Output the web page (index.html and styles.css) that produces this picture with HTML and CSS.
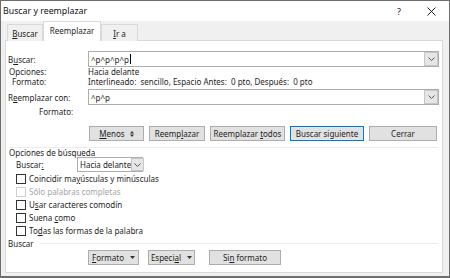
FILE: index.html
```
<!DOCTYPE html>
<html lang="es">
<head>
<meta charset="utf-8">
<title>Buscar y reemplazar</title>
<link rel="stylesheet" href="styles.css">
</head>
<body>
<div class="window">
  <div class="titlebar">
    <span class="title">Buscar y reemplazar</span>
    <span class="help">?</span>
    <span class="close"><svg width="9" height="9" viewBox="0 0 9 9"><path d="M0.5 0.5L8.5 8.5M8.5 0.5L0.5 8.5" stroke="#222" stroke-width="1"/></svg></span>
  </div>
  <div class="body">
    <div class="tabs">
      <div class="tab"><span><u>B</u>uscar</span></div>
      <div class="tab active"><span>Reemplazar</span></div>
      <div class="tab tab-go"><span><u>I</u>r a</span></div>
    </div>
    <div class="panel">
      <div class="field field-find">
        <span class="label">B<u>u</u>scar:</span>
        <div class="combo"><span class="value">^p^p^p^p<span class="caret"></span></span>
          <span class="drop"><svg width="7" height="4" viewBox="0 0 7 4"><path d="M0.5 0.5L3.5 3.5L6.5 0.5" fill="none" stroke="#555" stroke-width="1"/></svg></span>
        </div>
      </div>
      <div class="info"><span class="label">Opciones:</span><span>Hacia delante</span></div>
      <div class="info"><span class="label label-fmt">Formato:</span><span>Interlineado:&nbsp; sencillo, Espacio Antes:&nbsp; 0 pto, Después:&nbsp; 0 pto</span></div>
      <div class="field field-replace">
        <span class="label">R<u>e</u>emplazar con:</span>
        <div class="combo"><span class="value">^p^p</span>
          <span class="drop"><svg width="7" height="4" viewBox="0 0 7 4"><path d="M0.5 0.5L3.5 3.5L6.5 0.5" fill="none" stroke="#555" stroke-width="1"/></svg></span>
        </div>
      </div>
      <div class="info info-fmt2"><span class="label label-fmt2">Formato:</span></div>
      <div class="buttons buttons-top">
        <div class="btn b-less"><span><u>M</u>enos</span><svg class="updown" width="4" height="6" viewBox="0 0 4 6"><path d="M2 0L4 2.4H0Z M2 6L4 3.6H0Z" fill="#333"/></svg></div>
        <div class="btn b-rep"><span>Reemp<u>l</u>azar</span></div>
        <div class="btn b-all"><span>Reemplazar <u>t</u>odos</span></div>
        <div class="btn b-next focus"><span>Buscar siguiente</span></div>
        <div class="btn b-close"><span>Cerrar</span></div>
      </div>
      <div class="sep"></div>
      <div class="section">Opciones de búsqueda</div>
      <div class="search-dir">
        <span class="label2">Buscar<u>:</u></span>
        <div class="select"><span>Hacia delante</span><span class="drop"><svg width="7" height="4" viewBox="0 0 7 4"><path d="M0.5 0.5L3.5 3.5L6.5 0.5" fill="none" stroke="#555" stroke-width="1"/></svg></span></div>
      </div>
      <div class="check"><span class="box"></span><span>Coincidir ma<u>y</u>úsculas y minúsculas</span></div>
      <div class="check disabled"><span class="box"></span><span>Sólo palabras completas</span></div>
      <div class="check"><span class="box"></span><span>U<u>s</u>ar caracteres comodín</span></div>
      <div class="check"><span class="box"></span><span>Suena <u>c</u>omo</span></div>
      <div class="check"><span class="box"></span><span>To<u>d</u>as las formas de la palabra</span></div>
      <div class="group"><span>Buscar</span><span class="gline"></span></div>
      <div class="buttons buttons-bottom">
        <div class="btn b-fmt"><span><u>F</u>ormato</span><svg class="tri" width="5" height="3" viewBox="0 0 5 3"><path d="M0 0H5L2.5 3Z" fill="#333"/></svg></div>
        <div class="btn b-spec"><span>Especi<u>a</u>l</span><svg class="tri" width="5" height="3" viewBox="0 0 5 3"><path d="M0 0H5L2.5 3Z" fill="#333"/></svg></div>
        <div class="btn b-nofmt"><span>Si<u>n</u> formato</span></div>
      </div>
    </div>
  </div>
</div>
</body>
</html>
```
FILE: styles.css
```
* { box-sizing: border-box; }
html, body { margin: 0; padding: 0; }
body {
  width: 450px;
  height: 278px;
  overflow: hidden;
  font-family: "Noto Sans", "DejaVu Sans", sans-serif;
  font-size: 8px;
  color: #1e1e1e;
  background: #fff;
  white-space: nowrap;
}
u { text-decoration: underline; text-underline-offset: 1px; }
.window {
  width: 450px;
  height: 278px;
  border: 1px solid #6e6e6e;
  border-bottom-width: 2px;
  background: #f0f0f0;
  display: flex;
  flex-direction: column;
}
.titlebar {
  height: 20px;
  background: #fff;
  display: flex;
  align-items: center;
  padding-left: 2px;
  font-size: 8.8px;
  color: #111;
}
.title { flex: 1; }
.help { width: 12px; text-align: center; margin-right: 22px; font-size: 9px; }
.close { width: 10px; height: 9px; margin-right: 12px; display: flex; }
.body {
  flex: 1;
  padding: 0 0 0 4px;
  display: flex;
  flex-direction: column;
}
.tabs {
  display: flex;
  align-items: flex-end;
  height: 20px;
  padding-left: 2px;
  position: relative;
  z-index: 1;
  margin-bottom: -1px;
}
.tab {
  height: 17px;
  width: 36px;
  border: 1px solid #d9d9d9;
  border-bottom: none;
  background: #f0f0f0;
  display: flex;
  align-items: center;
  justify-content: center;
}
.tab.active {
  height: 20px;
  width: 58px;
  background: #fff;
  border-color: #d9d9d9;
  padding-bottom: 2px;
}
.tab-go { width: 37px; }
.panel {
  width: 438px;
  height: 233px;
  background: #fff;
  border: 1px solid #d9d9d9;
  display: flex;
  flex-direction: column;
}
.field {
  display: flex;
  align-items: center;
  height: 16px;
  padding-left: 2px;
}
.field-find { margin-top: 10px; }
.field-replace { margin-top: 2px; }
.label { width: 80px; flex: none; }
.combo {
  width: 351px;
  height: 16px;
  border: 1px solid #adadad;
  display: flex;
  align-items: center;
  padding-left: 2px;
}
.combo .value { flex: 1; display: flex; align-items: center; }
.caret {
  display: inline-block;
  width: 1px;
  height: 10px;
  margin-left: 1px;
  background: #000;
}
.drop {
  width: 14px;
  height: 14px;
  background: #e6e6e6;
  border: 1px solid #c6c6c6;
  display: flex;
  align-items: center;
  justify-content: center;
  flex: none;
}
.info {
  display: flex;
  height: 10px;
  line-height: 10px;
  padding-left: 3px;
}
.info .label { width: 79px; }
.label-fmt { padding-left: 3px; }
.info-fmt2 { margin-top: 2px; }
.label-fmt2 { padding-left: 30px; }
.buttons {
  display: flex;
  gap: 5px;
  height: 15px;
}
.buttons-top { margin-top: 9px; padding-left: 83px; }
.btn {
  height: 15px;
  background: #e1e1e1;
  border: 1px solid #adadad;
  display: flex;
  align-items: center;
  justify-content: center;
  flex: none;
}
.btn.focus { border-color: #0078d7; box-shadow: inset 0 0 0 1px #dbe9f7; }
.b-less { width: 55px; }
.b-rep { width: 56px; }
.b-all { width: 75px; }
.b-next { width: 74px; }
.b-close { width: 68px; }
.sep {
  height: 1px;
  background: #ececec;
  margin: 6px 4px 0 4px;
}
.section {
  height: 9px;
  line-height: 9px;
  padding-left: 3px;
}
.search-dir {
  display: flex;
  align-items: center;
  height: 15px;
  padding-left: 10px;
}
.label2 { width: 61px; }
.select {
  width: 66px;
  height: 15px;
  border: 1px solid #adadad;
  display: flex;
  align-items: center;
  justify-content: space-between;
  padding-left: 2px;
}
.select .drop { width: 13px; height: 13px; }
.check {
  display: flex;
  align-items: center;
  height: 13px;
  padding-left: 10px;
}
.box {
  width: 10px;
  height: 10px;
  border: 1px solid #333;
  background: #fff;
  margin-right: 3px;
  flex: none;
}
.check.disabled { color: #a6a6a6; }
.check.disabled .box { border-color: #cfcfcf; }
.group {
  display: flex;
  align-items: center;
  height: 13px;
  padding-left: 2px;
}
.gline {
  flex: 1;
  height: 1px;
  background: #ececec;
  margin: 0 4px 0 6px;
}
.buttons-bottom { padding-left: 82px; }
.b-fmt { width: 51px; }
.b-spec { width: 47px; margin-left: 4px; }
.b-nofmt { width: 72px; margin-left: 9px; }
.updown { margin-left: 5px; }
.tri { margin-left: 6px; }
```
